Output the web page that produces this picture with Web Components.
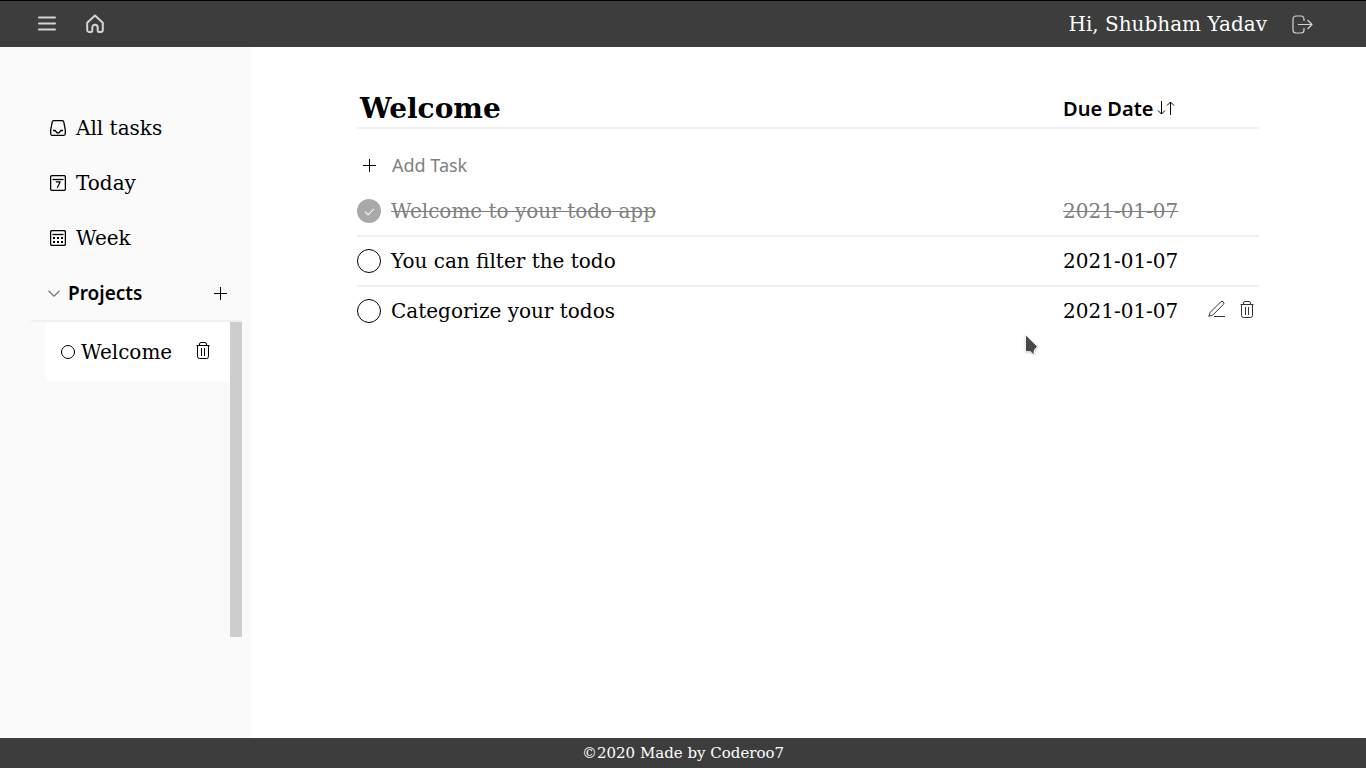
<!DOCTYPE html>
<html lang="en">
<head>
<meta charset="utf-8">
<meta name="viewport" content="width=device-width, initial-scale=1">
<title>Todo</title>
<style>
html, body { margin: 0; }
body { font: 20px/24px "DejaVu Serif", serif; color: #000; background: #fff; }
</style>
</head>
<body>
<todo-app></todo-app>
<script>
const base = `
*, *::before { box-sizing: border-box; }
button { appearance: none; border: 0; padding: 0; margin: 0; background: none; color: inherit; font: inherit; cursor: pointer; display: inline-flex; align-items: center; }
a { color: inherit; text-decoration: none; }
ul { list-style: none; margin: 0; padding: 0; }
`;

const icons = {
  menu: '<path d="M2 3.500h16M2 9.500h16M2 15.500h16" stroke-linecap="round"/>',
  home: '<path d="M10 1.500 2.200 8.800v7.200a2 2 0 0 0 2 2h1.600a1.500 1.500 0 0 0 1.500-1.500V13.400a2.700 2.700 0 0 1 5.400 0v3.100a1.500 1.500 0 0 0 1.500 1.500h1.600a2 2 0 0 0 2-2V8.800z"/>',
  logout: '<path d="M12 6V4a3 3 0 0 0-3-3H4a3 3 0 0 0-3 3v11a3 3 0 0 0 3 3h5a3 3 0 0 0 3-3v-2M6 9.500h14M15.500 5l4.500 4.500-4.500 4.500" stroke-width="1.200"/>',
  inbox: '<path d="M3.600.7h8.800c.7 0 1.200.4 1.300 1l1.600 8.100v4c0 .9-.6 1.500-1.500 1.500H2.200c-.9 0-1.500-.6-1.500-1.500v-4L2.300 1.700c.1-.6.6-1 1.300-1z"/><path d="M3 10.500h2c.8 0 1.100 2.500 3 2.500s2.200-2.500 3-2.500h2"/>',
  today: '<rect x=".6" y=".6" width="14.800" height="14.800" rx="1.500"/><path d="M2.500 4.500h11"/><path d="M5.800 6.800h4.400L7.300 12.700" stroke-width="1.200"/>',
  week: '<rect x=".6" y=".6" width="14.800" height="14.800" rx="1.500"/><path d="M2.500 4.500h11"/><path d="M3 8h2m2 0h2m2 0h2M3 12h2m2 0h2m2 0h2" stroke-width="1.800"/>',
  down: '<path d="m.5.8 5.500 5.400L11.500.8" stroke-width="1.200"/>',
  plus: '<path d="M6.500 0v13M0 6.500h13"/>',
  trash: '<path d="M.5 3.500h13M1.500 3.500v11q0 2 2 2h7q2 0 2-2v-11M3.500 3.500V2q0-1.500 1.500-1.500h4q1.500 0 1.500 1.500v1.500M5.500 6v8M8.500 6v8"/>',
  pen: '<path d="M6 16.500h11"/><path d="M.8 16.300 2.200 12.400 12.700 1.900q1.300-1.300 2.600 0t0 2.600L4.800 15z"/>',
  sort: '<path d="M4.500 0v13M1 9.500 4.500 13 8 9.500M13.500 14V1M10 4.500 13.500 1 17 4.500"/>',
  circle: '<circle cx="7" cy="7" r="6.500"/>'
};

class AppIcon extends HTMLElement {
  constructor() { super(); this.attachShadow({ mode: 'open' }); }
  connectedCallback() {
    const w = this.getAttribute('w'), h = this.getAttribute('h'), s = this.getAttribute('stroke') || 1;
    this.shadowRoot.innerHTML = `<style>:host{display:block;flex:none}svg{display:block;fill:none;stroke:currentColor;stroke-linecap:butt;stroke-linejoin:round}</style>
    <svg width="${w}" height="${h}" viewBox="0 0 ${w} ${h}" stroke-width="${s}" aria-hidden="true">${icons[this.getAttribute('name')]}</svg>`;
  }
}
customElements.define('app-icon', AppIcon);

function define(name, css, html) {
  const t = document.createElement('template');
  customElements.define(name, class extends HTMLElement {
    constructor() {
      super();
      t.innerHTML = `<style>${base}${css}</style>${typeof html === 'function' ? html(this) : html}`;
      this.attachShadow({ mode: 'open' }).append(document.importNode(t.content, true));
    }
  });
}

define('top-bar', `
:host { display: block; background: #3d3d3d; color: #fff; border-top: 1px solid #000; }
header { display: flex; align-items: center; height: 46px; padding: 0 53px 0 37px; }
.home { margin-left: 28px; }
button, .home { color: #d4d4d4; }
.user { margin-left: auto; margin-right: 25px; }
`, `<header>
<button aria-label="Menu"><app-icon name="menu" w="20" h="20" stroke="2"></app-icon></button>
<a class="home" href="#" aria-label="Home"><app-icon name="home" w="20" h="20" stroke="2"></app-icon></a>
<span class="user">Hi, Shubham Yadav</span>
<button aria-label="Log out"><app-icon name="logout" w="21" h="19"></app-icon></button>
</header>`);

define('nav-link', `
:host { display: block; }
a { display: flex; align-items: center; gap: 10px; padding: 15px 0; }
`, el => `<a href="#"><app-icon name="${el.getAttribute('icon')}" w="16" h="16" stroke="1.300"></app-icon><slot></slot></a>`);

define('project-item', `
:host { display: block; background: #fff; }
div { display: flex; align-items: center; height: 60px; padding: 0 20px 0 15px; }
a { display: flex; align-items: center; gap: 6px; flex: 1; }
button { padding-bottom: 4px; }
`, `<div><a href="#"><app-icon name="circle" w="14" h="14" stroke="1"></app-icon><slot></slot></a>
<button aria-label="Delete project"><app-icon name="trash" w="14" h="17"></app-icon></button></div>`);

define('side-bar', `
:host { display: block; width: 250px; flex: none; background: #fafafa; }
nav { display: grid; gap: 1px; padding: 54px 50px 0; }
.head { display: flex; align-items: center; height: 56px; margin: 1px 8px 0 31px; padding: 0 15px 0 17px; border-bottom: 2px solid #f0f0f0; }
h2 { flex: 1; margin: 0 0 0 8px; font: 600 19px/24px "Noto Sans", sans-serif; }
.head app-icon[name=down] { color: #777; }
.list { display: flex; height: 315px; margin: 0 8px 0 46px; }
ul { flex: 1; }
.bar { width: 12px; background: #cdcdcd; }
`, `<nav aria-label="Filters">
<nav-link icon="inbox">All tasks</nav-link>
<nav-link icon="today">Today</nav-link>
<nav-link icon="week">Week</nav-link>
</nav>
<div class="head"><button aria-label="Collapse projects"><app-icon name="down" w="12" h="7"></app-icon></button><h2>Projects</h2><button aria-label="Add project"><app-icon name="plus" w="13" h="13"></app-icon></button></div>
<div class="list"><ul><li><project-item>Welcome</project-item></li></ul><div class="bar"></div></div>`);

define('task-item', `
:host { display: block; }
.row { display: grid; grid-template-columns: 1fr 145px 51px; align-items: center; height: 50px; border-bottom: 2px solid #f0f0f0; }
:host([last]) .row { border-color: transparent; }
label { display: flex; align-items: center; gap: 10px; }
input { appearance: none; flex: none; width: 24px; height: 24px; margin: 0; border: 1px solid #000; border-radius: 50%; display: grid; place-items: center; }
input:checked { border: 0; background: #a9a9a9; }
input:checked::before { content: ""; width: 9px; height: 5px; border: solid #fff; border-width: 0 0 1px 1px; transform: translateY(-1px) rotate(-45deg); }
:host([done]) span, :host([done]) time { color: #808080; text-decoration: line-through 1px; }
time { justify-self: start; }
.actions { display: flex; gap: 14px; padding-bottom: 4px; color: #333; }
`, el => `<div class="row"><label><input type="checkbox"${el.hasAttribute('done') ? ' checked' : ''}><span><slot></slot></span></label>
<time datetime="2021-01-07">2021-01-07</time>
${el.hasAttribute('last') ? `<div class="actions"><button aria-label="Edit"><app-icon name="pen" w="18" h="18"></app-icon></button><button aria-label="Delete"><app-icon name="trash" w="14" h="17"></app-icon></button></div>` : ''}</div>`);

define('task-board', `
:host { display: block; flex: 1; padding: 40px 107px; }
.head { display: grid; grid-template-columns: 1fr 196px; align-items: center; height: 42px; border-bottom: 2px solid #f0f0f0; }
h1 { margin: 2px 0 0 3px; font-size: 28px; line-height: 40px; }
.sort { gap: 4px; font: 600 20px/24px "Noto Sans", sans-serif; justify-self: start; }
.sort { padding-top: 2px; }
.sort app-icon { padding-bottom: 2px; }
.add { margin: 23px 0 9px 6px; gap: 16px; font: 18px/26px "Noto Sans", sans-serif; display: flex; }
.add span { color: #808080; }
`, `<div class="head"><h1>Welcome</h1><button class="sort">Due Date<app-icon name="sort" w="18" h="15"></app-icon></button></div>
<button class="add"><app-icon name="plus" w="13" h="13"></app-icon><span>Add Task</span></button>
<ul>
<li><task-item done>Welcome to your todo app</task-item></li>
<li><task-item>You can filter the todo</task-item></li>
<li><task-item last>Categorize your todos</task-item></li>
</ul>`);

define('page-footer', `
:host { display: block; background: #3d3d3d; color: #fff; }
footer { font-size: 15px; line-height: 30px; text-align: center; }
`, `<footer>©2020 Made by Coderoo7</footer>`);

define('mouse-pointer', `
:host { position: absolute; left: 1023px; top: 333px; pointer-events: none; }
svg { display: block; filter: drop-shadow(0 1px 1px #0004); }
`, `<svg width="18" height="24" viewBox="0 0 18 24"><path d="M2.500 1v18l3.500-1.500h1.500l3 3.500 1.500-1v-3L15 13z" fill="#fff"/><path d="M3 2.500v15.500h4.500l3 3 .5-4 3-3.500z" fill="#484848"/></svg>`);

define('todo-app', `
:host { display: flex; flex-direction: column; min-height: 100vh; }
main { display: flex; flex: 1; }
`, `<top-bar></top-bar><main><side-bar></side-bar><task-board></task-board></main><page-footer></page-footer><mouse-pointer></mouse-pointer>`);
</script>
</body>
</html>
